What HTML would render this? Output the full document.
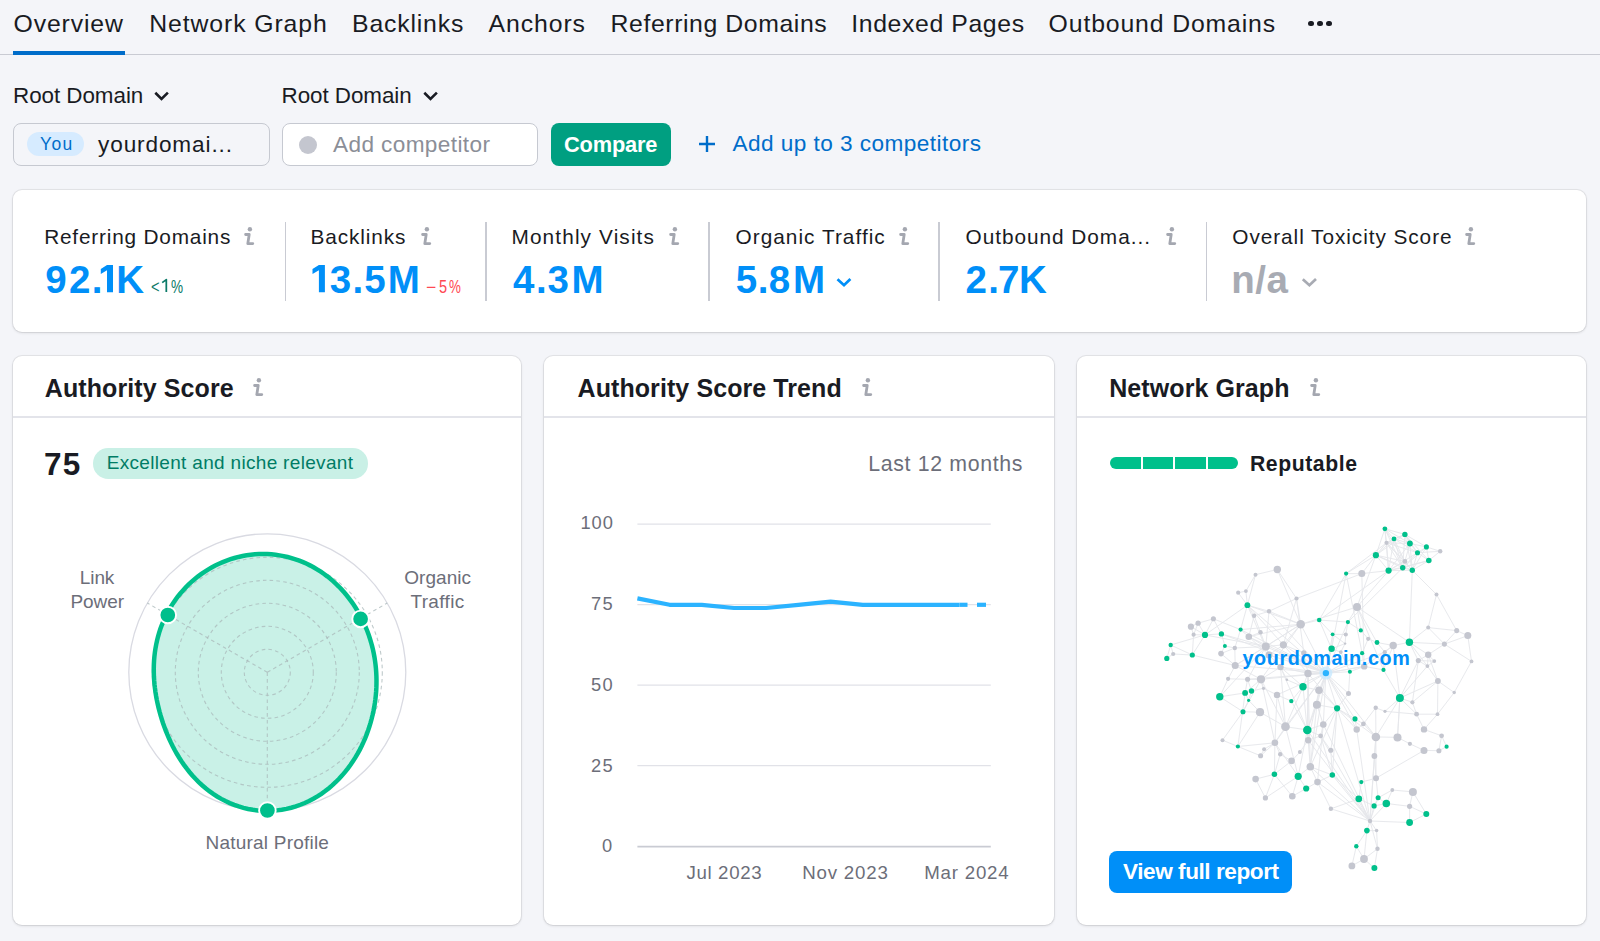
<!DOCTYPE html><html><head><meta charset="utf-8"><style>
*{margin:0;padding:0;box-sizing:border-box}
html,body{width:1600px;height:941px;overflow:hidden;background:#f4f5f9;font-family:"Liberation Sans",sans-serif}
.t{position:absolute;white-space:nowrap;line-height:1}
.ic{position:absolute;overflow:visible}
.box{position:absolute}
.card{position:absolute;background:#fff;border-radius:9px;box-shadow:0 0 0 1px rgba(25,27,35,0.07),0 1px 3px rgba(25,27,35,0.12)}
svg.full{position:absolute;left:0;top:0}
</style></head><body>
<div class="box" style="left:0;top:53.5px;width:1600px;height:1.5px;background:#c9cbd3"></div>
<div class="box" style="left:13px;top:51px;width:112px;height:4px;background:#006dca"></div>
<div class="box" style="left:1307.8px;top:20.6px;width:5.8px;height:5.8px;border-radius:50%;background:#191b23"></div>
<div class="box" style="left:1316.8999999999999px;top:20.6px;width:5.8px;height:5.8px;border-radius:50%;background:#191b23"></div>
<div class="box" style="left:1326.1px;top:20.6px;width:5.8px;height:5.8px;border-radius:50%;background:#191b23"></div>
<svg class="ic" style="left:0;top:0" width="1" height="1"><path d="M155.3 92.8 L161.5 98.9 L167.9 92.6" fill="none" stroke="#191b23" stroke-width="2.6" stroke-linejoin="miter"/></svg>
<svg class="ic" style="left:0;top:0" width="1" height="1"><path d="M424.3 92.8 L430.5 98.9 L436.9 92.6" fill="none" stroke="#191b23" stroke-width="2.6" stroke-linejoin="miter"/></svg>
<div class="box" style="left:13px;top:123px;width:257px;height:43px;border:1.2px solid #c6c9d1;border-radius:8px"></div>
<div class="box" style="left:27px;top:132px;width:57px;height:24px;border-radius:12px;background:#d6ebff"></div>
<div class="box" style="left:282px;top:123px;width:256px;height:43px;border:1.2px solid #c6c9d1;border-radius:8px;background:#fff"></div>
<div class="box" style="left:298.5px;top:135.5px;width:18.5px;height:18.5px;border-radius:50%;background:#c4c6cf"></div>
<div class="box" style="left:551px;top:123px;width:120px;height:43px;border-radius:8px;background:#009f81"></div>
<svg class="ic" style="left:697px;top:134px" width="20" height="20"><path d="M2 10 H18 M10 2 V18" stroke="#006dca" stroke-width="2.4"/></svg>
<div class="card" style="left:13px;top:190px;width:1573px;height:142px"></div>
<div class="box" style="left:284.95px;top:221.5px;width:1.5px;height:79px;background:#c9cbd3"></div>
<div class="box" style="left:485.45px;top:221.5px;width:1.5px;height:79px;background:#c9cbd3"></div>
<div class="box" style="left:708.45px;top:221.5px;width:1.5px;height:79px;background:#c9cbd3"></div>
<div class="box" style="left:938.45px;top:221.5px;width:1.5px;height:79px;background:#c9cbd3"></div>
<div class="box" style="left:1205.95px;top:221.5px;width:1.5px;height:79px;background:#c9cbd3"></div>
<svg class="ic" style="left:243.3px;top:226.0px" width="13" height="21" viewBox="0 0 13 21"><circle cx="6.9" cy="3.2" r="2.2" fill="#a4a7b0"/><path d="M2.6 8.5 H6.2 L4.8 17.6 H9.8" fill="none" stroke="#a4a7b0" stroke-width="2.8" stroke-linecap="round" stroke-linejoin="round"/></svg>
<svg class="ic" style="left:419.9px;top:226.0px" width="13" height="21" viewBox="0 0 13 21"><circle cx="6.9" cy="3.2" r="2.2" fill="#a4a7b0"/><path d="M2.6 8.5 H6.2 L4.8 17.6 H9.8" fill="none" stroke="#a4a7b0" stroke-width="2.8" stroke-linecap="round" stroke-linejoin="round"/></svg>
<svg class="ic" style="left:668.0px;top:226.0px" width="13" height="21" viewBox="0 0 13 21"><circle cx="6.9" cy="3.2" r="2.2" fill="#a4a7b0"/><path d="M2.6 8.5 H6.2 L4.8 17.6 H9.8" fill="none" stroke="#a4a7b0" stroke-width="2.8" stroke-linecap="round" stroke-linejoin="round"/></svg>
<svg class="ic" style="left:897.9px;top:226.0px" width="13" height="21" viewBox="0 0 13 21"><circle cx="6.9" cy="3.2" r="2.2" fill="#a4a7b0"/><path d="M2.6 8.5 H6.2 L4.8 17.6 H9.8" fill="none" stroke="#a4a7b0" stroke-width="2.8" stroke-linecap="round" stroke-linejoin="round"/></svg>
<svg class="ic" style="left:1164.8px;top:226.0px" width="13" height="21" viewBox="0 0 13 21"><circle cx="6.9" cy="3.2" r="2.2" fill="#a4a7b0"/><path d="M2.6 8.5 H6.2 L4.8 17.6 H9.8" fill="none" stroke="#a4a7b0" stroke-width="2.8" stroke-linecap="round" stroke-linejoin="round"/></svg>
<svg class="ic" style="left:1464.0px;top:226.0px" width="13" height="21" viewBox="0 0 13 21"><circle cx="6.9" cy="3.2" r="2.2" fill="#a4a7b0"/><path d="M2.6 8.5 H6.2 L4.8 17.6 H9.8" fill="none" stroke="#a4a7b0" stroke-width="2.8" stroke-linecap="round" stroke-linejoin="round"/></svg>
<svg class="ic" style="left:0;top:0" width="1" height="1"><path d="M837.5 279.2 L844 285.2 L850.4 279.0" fill="none" stroke="#008ff8" stroke-width="2.7" stroke-linejoin="miter"/></svg>
<svg class="ic" style="left:0;top:0" width="1" height="1"><path d="M1302.8 279.2 L1309.4 285.2 L1316.0 279.0" fill="none" stroke="#a8abb3" stroke-width="2.7" stroke-linejoin="miter"/></svg>
<div class="card" style="left:12.6px;top:355.5px;width:508.6px;height:569.5px"></div>
<div class="box" style="left:12.6px;top:416px;width:508.6px;height:1.5px;background:#e3e4ea"></div>
<div class="card" style="left:544.3px;top:355.5px;width:510.1px;height:569.5px"></div>
<div class="box" style="left:544.3px;top:416px;width:510.1px;height:1.5px;background:#e3e4ea"></div>
<div class="card" style="left:1077.4px;top:355.5px;width:509.1px;height:569.5px"></div>
<div class="box" style="left:1077.4px;top:416px;width:509.1px;height:1.5px;background:#e3e4ea"></div>
<svg class="ic" style="left:252.4px;top:377.3px" width="13" height="21" viewBox="0 0 13 21"><circle cx="6.9" cy="3.2" r="2.2" fill="#a4a7b0"/><path d="M2.6 8.5 H6.2 L4.8 17.6 H9.8" fill="none" stroke="#a4a7b0" stroke-width="2.8" stroke-linecap="round" stroke-linejoin="round"/></svg>
<svg class="ic" style="left:860.7px;top:377.3px" width="13" height="21" viewBox="0 0 13 21"><circle cx="6.9" cy="3.2" r="2.2" fill="#a4a7b0"/><path d="M2.6 8.5 H6.2 L4.8 17.6 H9.8" fill="none" stroke="#a4a7b0" stroke-width="2.8" stroke-linecap="round" stroke-linejoin="round"/></svg>
<svg class="ic" style="left:1309.0px;top:377.3px" width="13" height="21" viewBox="0 0 13 21"><circle cx="6.9" cy="3.2" r="2.2" fill="#a4a7b0"/><path d="M2.6 8.5 H6.2 L4.8 17.6 H9.8" fill="none" stroke="#a4a7b0" stroke-width="2.8" stroke-linecap="round" stroke-linejoin="round"/></svg>
<div class="box" style="left:93px;top:448px;width:275px;height:30.6px;border-radius:15.3px;background:#c9f0e6"></div>
<div class="box" style="left:1110px;top:457.4px;width:30.5px;height:11.8px;border-radius:6px 0 0 6px;background:#00c08b"></div>
<div class="box" style="left:1143px;top:457.4px;width:30px;height:11.8px;border-radius:0;background:#00c08b"></div>
<div class="box" style="left:1175.2px;top:457.4px;width:30.399999999999864px;height:11.8px;border-radius:0;background:#00c08b"></div>
<div class="box" style="left:1207.6px;top:457.4px;width:30.40000000000009px;height:11.8px;border-radius:0 6px 6px 0;background:#00c08b"></div>
<div class="box" style="left:1109.2px;top:850.8px;width:183px;height:42.4px;border-radius:8px;background:#008ff8"></div>
<svg class="full" width="1600" height="941" viewBox="0 0 1600 941"><circle cx="267.3" cy="672.3" r="138.5" fill="none" stroke="#d9dae2" stroke-width="1.3"/>
<path d="M376.22 672.30 L376.40 676.11 L376.49 679.94 L376.47 683.77 L376.36 687.63 L376.14 691.49 L375.81 695.37 L375.39 699.25 L374.86 703.14 L374.22 707.04 L373.48 710.95 L372.62 714.85 L371.66 718.77 L370.59 722.68 L369.40 726.59 L368.09 730.49 L366.67 734.39 L365.12 738.28 L363.44 742.15 L361.64 746.00 L359.70 749.83 L357.63 753.63 L355.41 757.39 L353.06 761.11 L350.56 764.77 L347.92 768.37 L345.12 771.91 L342.18 775.36 L339.08 778.72 L335.84 781.98 L332.44 785.13 L328.90 788.15 L325.21 791.03 L321.38 793.77 L317.41 796.34 L313.32 798.73 L309.10 800.94 L304.77 802.96 L300.33 804.77 L295.79 806.36 L291.18 807.72 L286.49 808.85 L281.75 809.74 L276.96 810.38 L272.14 810.77 L267.30 810.91 L262.46 810.80 L257.64 810.43 L252.85 809.81 L248.10 808.94 L243.40 807.83 L238.78 806.48 L234.24 804.90 L229.79 803.10 L225.45 801.09 L221.23 798.88 L217.13 796.47 L213.16 793.90 L209.33 791.15 L205.64 788.26 L202.10 785.23 L198.71 782.07 L195.46 778.81 L192.37 775.44 L189.42 771.98 L186.62 768.45 L183.96 764.85 L181.45 761.20 L179.07 757.50 L176.82 753.77 L174.70 750.00 L172.71 746.20 L170.83 742.39 L169.06 738.56 L167.40 734.72 L165.84 730.88 L164.39 727.02 L163.03 723.16 L161.77 719.29 L160.59 715.41 L159.51 711.53 L158.52 707.64 L157.62 703.75 L156.80 699.85 L156.08 695.94 L155.45 692.02 L154.92 688.09 L154.48 684.16 L154.15 680.21 L153.91 676.26 L153.79 672.30 L153.77 668.34 L153.87 664.37 L154.08 660.40 L154.41 656.43 L154.87 652.48 L155.45 648.53 L156.17 644.59 L157.01 640.67 L157.98 636.78 L159.09 632.91 L160.33 629.08 L161.71 625.29 L163.23 621.54 L164.87 617.84 L166.66 614.19 L168.57 610.61 L170.62 607.09 L172.80 603.64 L175.10 600.27 L177.53 596.97 L180.08 593.77 L182.75 590.66 L185.54 587.64 L188.44 584.72 L191.45 581.91 L194.57 579.21 L197.78 576.62 L201.10 574.15 L204.51 571.81 L208.00 569.59 L211.58 567.51 L215.24 565.56 L218.97 563.75 L222.77 562.09 L226.63 560.57 L230.55 559.20 L234.52 557.99 L238.54 556.93 L242.59 556.03 L246.67 555.30 L250.78 554.73 L254.90 554.32 L259.03 554.08 L263.17 554.00 L267.30 554.10 L271.42 554.35 L275.52 554.78 L279.59 555.36 L283.63 556.11 L287.63 557.02 L291.58 558.08 L295.47 559.30 L299.31 560.66 L303.08 562.17 L306.78 563.82 L310.41 565.61 L313.95 567.52 L317.41 569.55 L320.78 571.71 L324.07 573.98 L327.25 576.35 L330.35 578.83 L333.34 581.40 L336.24 584.06 L339.03 586.81 L341.73 589.64 L344.32 592.54 L346.82 595.51 L349.21 598.55 L351.49 601.65 L353.68 604.81 L355.77 608.02 L357.75 611.29 L359.64 614.60 L361.42 617.96 L363.10 621.36 L364.69 624.80 L366.17 628.28 L367.56 631.79 L368.84 635.34 L370.03 638.92 L371.11 642.53 L372.10 646.17 L372.99 649.83 L373.78 653.53 L374.47 657.24 L375.05 660.97 L375.54 664.73 L375.93 668.51Z" fill="#c9f1e7"/>
<circle cx="267.3" cy="672.3" r="23" fill="none" stroke="#a9b8ba" stroke-opacity="0.75" stroke-width="1.1" stroke-dasharray="3.6 3.2"/>
<circle cx="267.3" cy="672.3" r="46" fill="none" stroke="#a9b8ba" stroke-opacity="0.75" stroke-width="1.1" stroke-dasharray="3.6 3.2"/>
<circle cx="267.3" cy="672.3" r="69" fill="none" stroke="#a9b8ba" stroke-opacity="0.75" stroke-width="1.1" stroke-dasharray="3.6 3.2"/>
<circle cx="267.3" cy="672.3" r="92" fill="none" stroke="#a9b8ba" stroke-opacity="0.75" stroke-width="1.1" stroke-dasharray="3.6 3.2"/>
<circle cx="267.3" cy="672.3" r="115" fill="none" stroke="#a9b8ba" stroke-opacity="0.75" stroke-width="1.1" stroke-dasharray="3.6 3.2"/>
<line x1="267.3" y1="672.3" x2="147.36" y2="603.05" stroke="#a9b8ba" stroke-opacity="0.75" stroke-width="1.1" stroke-dasharray="3.6 3.2"/>
<line x1="267.3" y1="672.3" x2="387.24" y2="603.05" stroke="#a9b8ba" stroke-opacity="0.75" stroke-width="1.1" stroke-dasharray="3.6 3.2"/>
<line x1="267.3" y1="672.3" x2="267.30" y2="810.80" stroke="#a9b8ba" stroke-opacity="0.75" stroke-width="1.1" stroke-dasharray="3.6 3.2"/>
<path d="M376.22 672.30 L376.40 676.11 L376.49 679.94 L376.47 683.77 L376.36 687.63 L376.14 691.49 L375.81 695.37 L375.39 699.25 L374.86 703.14 L374.22 707.04 L373.48 710.95 L372.62 714.85 L371.66 718.77 L370.59 722.68 L369.40 726.59 L368.09 730.49 L366.67 734.39 L365.12 738.28 L363.44 742.15 L361.64 746.00 L359.70 749.83 L357.63 753.63 L355.41 757.39 L353.06 761.11 L350.56 764.77 L347.92 768.37 L345.12 771.91 L342.18 775.36 L339.08 778.72 L335.84 781.98 L332.44 785.13 L328.90 788.15 L325.21 791.03 L321.38 793.77 L317.41 796.34 L313.32 798.73 L309.10 800.94 L304.77 802.96 L300.33 804.77 L295.79 806.36 L291.18 807.72 L286.49 808.85 L281.75 809.74 L276.96 810.38 L272.14 810.77 L267.30 810.91 L262.46 810.80 L257.64 810.43 L252.85 809.81 L248.10 808.94 L243.40 807.83 L238.78 806.48 L234.24 804.90 L229.79 803.10 L225.45 801.09 L221.23 798.88 L217.13 796.47 L213.16 793.90 L209.33 791.15 L205.64 788.26 L202.10 785.23 L198.71 782.07 L195.46 778.81 L192.37 775.44 L189.42 771.98 L186.62 768.45 L183.96 764.85 L181.45 761.20 L179.07 757.50 L176.82 753.77 L174.70 750.00 L172.71 746.20 L170.83 742.39 L169.06 738.56 L167.40 734.72 L165.84 730.88 L164.39 727.02 L163.03 723.16 L161.77 719.29 L160.59 715.41 L159.51 711.53 L158.52 707.64 L157.62 703.75 L156.80 699.85 L156.08 695.94 L155.45 692.02 L154.92 688.09 L154.48 684.16 L154.15 680.21 L153.91 676.26 L153.79 672.30 L153.77 668.34 L153.87 664.37 L154.08 660.40 L154.41 656.43 L154.87 652.48 L155.45 648.53 L156.17 644.59 L157.01 640.67 L157.98 636.78 L159.09 632.91 L160.33 629.08 L161.71 625.29 L163.23 621.54 L164.87 617.84 L166.66 614.19 L168.57 610.61 L170.62 607.09 L172.80 603.64 L175.10 600.27 L177.53 596.97 L180.08 593.77 L182.75 590.66 L185.54 587.64 L188.44 584.72 L191.45 581.91 L194.57 579.21 L197.78 576.62 L201.10 574.15 L204.51 571.81 L208.00 569.59 L211.58 567.51 L215.24 565.56 L218.97 563.75 L222.77 562.09 L226.63 560.57 L230.55 559.20 L234.52 557.99 L238.54 556.93 L242.59 556.03 L246.67 555.30 L250.78 554.73 L254.90 554.32 L259.03 554.08 L263.17 554.00 L267.30 554.10 L271.42 554.35 L275.52 554.78 L279.59 555.36 L283.63 556.11 L287.63 557.02 L291.58 558.08 L295.47 559.30 L299.31 560.66 L303.08 562.17 L306.78 563.82 L310.41 565.61 L313.95 567.52 L317.41 569.55 L320.78 571.71 L324.07 573.98 L327.25 576.35 L330.35 578.83 L333.34 581.40 L336.24 584.06 L339.03 586.81 L341.73 589.64 L344.32 592.54 L346.82 595.51 L349.21 598.55 L351.49 601.65 L353.68 604.81 L355.77 608.02 L357.75 611.29 L359.64 614.60 L361.42 617.96 L363.10 621.36 L364.69 624.80 L366.17 628.28 L367.56 631.79 L368.84 635.34 L370.03 638.92 L371.11 642.53 L372.10 646.17 L372.99 649.83 L373.78 653.53 L374.47 657.24 L375.05 660.97 L375.54 664.73 L375.93 668.51Z" fill="none" stroke="#00c08b" stroke-width="4.5"/>
<circle cx="167.8" cy="615.0" r="8.3" fill="#00bf8c" stroke="#fff" stroke-width="1.9"/>
<circle cx="360.6" cy="618.9" r="8.3" fill="#00bf8c" stroke="#fff" stroke-width="1.9"/>
<circle cx="267.4" cy="810.5" r="8.3" fill="#00bf8c" stroke="#fff" stroke-width="1.9"/><line x1="637.4" y1="524.2" x2="990.8" y2="524.2" stroke="#e1e2e8" stroke-width="1.3"/>
<line x1="637.4" y1="604.7" x2="990.8" y2="604.7" stroke="#e1e2e8" stroke-width="1.3"/>
<line x1="637.4" y1="685.2" x2="990.8" y2="685.2" stroke="#e1e2e8" stroke-width="1.3"/>
<line x1="637.4" y1="765.7" x2="990.8" y2="765.7" stroke="#e1e2e8" stroke-width="1.3"/>
<line x1="637.4" y1="846.6" x2="990.8" y2="846.6" stroke="#c9cbd3" stroke-width="1.6"/>
<path d="M637.4 598.4 L669.6 604.8 L701.8 604.8 L734.0 608.0 L766.2 608.0 L798.4 604.8 L830.6 601.6 L862.8 604.8 L895.0 604.8 L927.2 604.8 L959.4 604.8" fill="none" stroke="#2bb3ff" stroke-width="4.2" stroke-linejoin="round"/>
<line x1="959.4" y1="604.8" x2="967.5" y2="604.8" stroke="#2bb3ff" stroke-width="4.2"/>
<line x1="977" y1="604.8" x2="986" y2="604.8" stroke="#2bb3ff" stroke-width="4.2"/><g stroke="#d5d7de" stroke-width="0.9" opacity="0.6"><line x1="1384.9" y1="528.8" x2="1394.0" y2="538.9"/><line x1="1384.9" y1="528.8" x2="1386.5" y2="542.8"/><line x1="1384.9" y1="528.8" x2="1409.9" y2="543.5"/><line x1="1394.0" y1="538.9" x2="1404.9" y2="534.4"/><line x1="1394.0" y1="538.9" x2="1386.5" y2="542.8"/><line x1="1404.9" y1="534.4" x2="1409.9" y2="543.5"/><line x1="1404.9" y1="534.4" x2="1426.4" y2="546.9"/><line x1="1409.9" y1="543.5" x2="1426.4" y2="546.9"/><line x1="1409.9" y1="543.5" x2="1417.5" y2="552.7"/><line x1="1426.4" y1="546.9" x2="1417.5" y2="552.7"/><line x1="1426.4" y1="546.9" x2="1428.8" y2="560.5"/><line x1="1417.5" y1="552.7" x2="1428.8" y2="560.5"/><line x1="1375.9" y1="555.2" x2="1386.5" y2="542.8"/><line x1="1375.9" y1="555.2" x2="1394.0" y2="538.9"/><line x1="1375.9" y1="555.2" x2="1388.6" y2="570.6"/><line x1="1375.9" y1="555.2" x2="1404.9" y2="561.4"/><line x1="1386.5" y1="542.8" x2="1388.6" y2="570.6"/><line x1="1386.5" y1="542.8" x2="1404.9" y2="561.4"/><line x1="1386.5" y1="542.8" x2="1402.7" y2="567.8"/><line x1="1394.0" y1="538.9" x2="1402.7" y2="567.8"/><line x1="1394.0" y1="538.9" x2="1404.9" y2="561.4"/><line x1="1409.9" y1="543.5" x2="1404.9" y2="561.4"/><line x1="1409.9" y1="543.5" x2="1412.3" y2="570.3"/><line x1="1417.5" y1="552.7" x2="1402.7" y2="567.8"/><line x1="1417.5" y1="552.7" x2="1412.3" y2="570.3"/><line x1="1428.8" y1="560.5" x2="1412.3" y2="570.3"/><line x1="1428.8" y1="560.5" x2="1402.7" y2="567.8"/><line x1="1404.9" y1="561.4" x2="1388.6" y2="570.6"/><line x1="1404.9" y1="561.4" x2="1402.7" y2="567.8"/><line x1="1404.9" y1="561.4" x2="1412.3" y2="570.3"/><line x1="1388.6" y1="570.6" x2="1402.7" y2="567.8"/><line x1="1402.7" y1="567.8" x2="1412.3" y2="570.3"/><line x1="1440.2" y1="551.3" x2="1426.4" y2="546.9"/><line x1="1440.2" y1="551.3" x2="1428.8" y2="560.5"/><line x1="1404.9" y1="534.4" x2="1386.5" y2="542.8"/><line x1="1409.9" y1="543.5" x2="1388.6" y2="570.6"/><line x1="1417.5" y1="552.7" x2="1388.6" y2="570.6"/><line x1="1375.9" y1="555.2" x2="1346.1" y2="573.6"/><line x1="1346.1" y1="573.6" x2="1319.2" y2="620.0"/><line x1="1388.6" y1="570.6" x2="1361.8" y2="573.6"/><line x1="1361.8" y1="573.6" x2="1296.5" y2="598.5"/><line x1="1375.9" y1="555.2" x2="1357.0" y2="607.0"/><line x1="1412.3" y1="570.3" x2="1409.4" y2="642.3"/><line x1="1412.3" y1="570.3" x2="1436.5" y2="594.5"/><line x1="1436.5" y1="594.5" x2="1456.7" y2="630.6"/><line x1="1277.3" y1="569.5" x2="1255.5" y2="574.7"/><line x1="1255.5" y1="574.7" x2="1247.4" y2="605.2"/><line x1="1238.2" y1="592.7" x2="1247.4" y2="605.2"/><line x1="1245.9" y1="591.1" x2="1247.4" y2="605.2"/><line x1="1277.3" y1="569.5" x2="1296.5" y2="598.5"/><line x1="1247.4" y1="605.2" x2="1269.0" y2="611.3"/><line x1="1269.0" y1="611.3" x2="1300.7" y2="624.3"/><line x1="1247.4" y1="605.2" x2="1254.1" y2="615.8"/><line x1="1254.1" y1="615.8" x2="1260.5" y2="632.3"/><line x1="1247.4" y1="605.2" x2="1205.0" y2="634.9"/><line x1="1247.4" y1="605.2" x2="1240.6" y2="629.6"/><line x1="1247.4" y1="605.2" x2="1283.4" y2="644.8"/><line x1="1213.4" y1="618.8" x2="1205.0" y2="634.9"/><line x1="1213.4" y1="618.8" x2="1240.6" y2="629.6"/><line x1="1198.1" y1="623.2" x2="1205.0" y2="634.9"/><line x1="1190.9" y1="626.7" x2="1205.0" y2="634.9"/><line x1="1193.6" y1="634.7" x2="1205.0" y2="634.9"/><line x1="1205.0" y1="634.9" x2="1221.4" y2="633.9"/><line x1="1205.0" y1="634.9" x2="1170.7" y2="645.0"/><line x1="1170.7" y1="645.0" x2="1192.3" y2="655.0"/><line x1="1205.0" y1="634.9" x2="1192.3" y2="655.0"/><line x1="1221.4" y1="633.9" x2="1224.9" y2="645.9"/><line x1="1296.5" y1="598.5" x2="1283.4" y2="644.8"/><line x1="1269.0" y1="611.3" x2="1265.8" y2="646.6"/><line x1="1300.7" y1="624.3" x2="1319.2" y2="620.0"/><line x1="1260.5" y1="632.3" x2="1265.8" y2="646.6"/><line x1="1248.8" y1="636.8" x2="1265.8" y2="646.6"/><line x1="1234.8" y1="648.0" x2="1265.8" y2="646.6"/><line x1="1221.4" y1="633.9" x2="1265.8" y2="646.6"/><line x1="1170.7" y1="645.0" x2="1166.8" y2="658.4"/><line x1="1166.8" y1="658.4" x2="1173.2" y2="654.0"/><line x1="1173.2" y1="654.0" x2="1192.3" y2="655.0"/><line x1="1192.3" y1="655.0" x2="1235.2" y2="665.5"/><line x1="1221.0" y1="653.6" x2="1235.2" y2="665.5"/><line x1="1235.2" y1="665.5" x2="1228.1" y2="678.8"/><line x1="1228.1" y1="678.8" x2="1219.8" y2="696.8"/><line x1="1219.8" y1="696.8" x2="1245.1" y2="692.9"/><line x1="1245.1" y1="692.9" x2="1251.5" y2="691.0"/><line x1="1251.5" y1="691.0" x2="1247.6" y2="679.3"/><line x1="1235.2" y1="665.5" x2="1261.0" y2="679.3"/><line x1="1247.6" y1="679.3" x2="1261.0" y2="679.3"/><line x1="1261.0" y1="679.3" x2="1280.5" y2="667.1"/><line x1="1280.5" y1="667.1" x2="1308.0" y2="673.4"/><line x1="1269.0" y1="655.0" x2="1280.5" y2="667.1"/><line x1="1248.6" y1="700.3" x2="1245.1" y2="692.9"/><line x1="1243.0" y1="711.7" x2="1248.6" y2="700.3"/><line x1="1428.2" y1="627.6" x2="1456.7" y2="630.6"/><line x1="1456.7" y1="630.6" x2="1467.8" y2="635.6"/><line x1="1428.2" y1="627.6" x2="1409.4" y2="642.3"/><line x1="1409.4" y1="642.3" x2="1393.2" y2="645.5"/><line x1="1393.2" y1="645.5" x2="1377.0" y2="642.5"/><line x1="1377.0" y1="642.5" x2="1368.2" y2="638.8"/><line x1="1368.2" y1="638.8" x2="1360.8" y2="630.4"/><line x1="1360.8" y1="630.4" x2="1347.9" y2="622.1"/><line x1="1444.4" y1="644.1" x2="1456.7" y2="630.6"/><line x1="1444.4" y1="644.1" x2="1428.2" y2="654.7"/><line x1="1428.2" y1="654.7" x2="1418.3" y2="660.6"/><line x1="1418.3" y1="660.6" x2="1409.4" y2="642.3"/><line x1="1418.3" y1="660.6" x2="1434.3" y2="661.1"/><line x1="1418.3" y1="660.6" x2="1427.4" y2="666.1"/><line x1="1427.4" y1="666.1" x2="1437.9" y2="681.0"/><line x1="1437.9" y1="681.0" x2="1454.2" y2="692.5"/><line x1="1454.2" y1="692.5" x2="1471.5" y2="661.4"/><line x1="1471.5" y1="661.4" x2="1467.8" y2="635.6"/><line x1="1349.9" y1="671.7" x2="1325.9" y2="673.1"/><line x1="1383.5" y1="669.9" x2="1399.9" y2="698.0"/><line x1="1362.1" y1="653.2" x2="1364.2" y2="666.4"/><line x1="1364.2" y1="666.4" x2="1325.9" y2="673.1"/><line x1="1325.9" y1="673.1" x2="1308.0" y2="673.4"/><line x1="1325.9" y1="673.1" x2="1331.6" y2="648.8"/><line x1="1332.6" y1="634.3" x2="1331.6" y2="648.8"/><line x1="1331.6" y1="648.8" x2="1319.2" y2="620.0"/><line x1="1332.6" y1="634.3" x2="1345.1" y2="643.6"/><line x1="1345.1" y1="643.6" x2="1345.8" y2="634.5"/><line x1="1409.4" y1="642.3" x2="1428.2" y2="654.7"/><line x1="1285.5" y1="726.7" x2="1260.0" y2="712.2"/><line x1="1285.5" y1="726.7" x2="1274.9" y2="742.8"/><line x1="1285.5" y1="726.7" x2="1307.3" y2="729.9"/><line x1="1307.3" y1="729.9" x2="1323.3" y2="724.5"/><line x1="1307.3" y1="729.9" x2="1308.2" y2="740.2"/><line x1="1323.3" y1="724.5" x2="1337.1" y2="708.3"/><line x1="1320.6" y1="735.9" x2="1307.3" y2="729.9"/><line x1="1274.9" y1="742.8" x2="1237.9" y2="746.5"/><line x1="1237.9" y1="746.5" x2="1222.5" y2="740.2"/><line x1="1222.5" y1="740.2" x2="1243.0" y2="711.7"/><line x1="1260.0" y1="712.2" x2="1237.9" y2="746.5"/><line x1="1274.9" y1="742.8" x2="1280.2" y2="754.3"/><line x1="1274.9" y1="742.8" x2="1274.4" y2="774.3"/><line x1="1291.6" y1="760.9" x2="1274.4" y2="774.3"/><line x1="1310.3" y1="766.7" x2="1298.2" y2="776.3"/><line x1="1298.2" y1="776.3" x2="1306.2" y2="788.5"/><line x1="1306.2" y1="788.5" x2="1317.5" y2="782.1"/><line x1="1317.5" y1="782.1" x2="1332.3" y2="775.0"/><line x1="1332.3" y1="775.0" x2="1330.8" y2="750.3"/><line x1="1332.3" y1="775.0" x2="1337.1" y2="708.3"/><line x1="1255.6" y1="779.1" x2="1265.4" y2="797.9"/><line x1="1265.4" y1="797.9" x2="1298.2" y2="776.3"/><line x1="1274.4" y1="774.3" x2="1292.3" y2="796.3"/><line x1="1292.3" y1="796.3" x2="1306.2" y2="788.5"/><line x1="1317.5" y1="782.1" x2="1330.9" y2="808.8"/><line x1="1330.9" y1="808.8" x2="1370.0" y2="821.0"/><line x1="1370.0" y1="821.0" x2="1409.6" y2="822.5"/><line x1="1370.0" y1="821.0" x2="1366.9" y2="830.6"/><line x1="1370.0" y1="821.0" x2="1358.8" y2="798.8"/><line x1="1370.0" y1="821.0" x2="1378.1" y2="797.8"/><line x1="1370.0" y1="821.0" x2="1386.3" y2="803.5"/><line x1="1370.0" y1="821.0" x2="1374.1" y2="805.9"/><line x1="1358.8" y1="798.8" x2="1332.3" y2="775.0"/><line x1="1376.0" y1="778.2" x2="1361.3" y2="782.1"/><line x1="1376.0" y1="778.2" x2="1375.9" y2="736.9"/><line x1="1374.4" y1="756.0" x2="1376.0" y2="778.2"/><line x1="1375.9" y1="736.9" x2="1375.7" y2="707.8"/><line x1="1375.7" y1="707.8" x2="1385.0" y2="711.3"/><line x1="1385.0" y1="711.3" x2="1416.6" y2="714.2"/><line x1="1416.6" y1="714.2" x2="1437.5" y2="714.2"/><line x1="1437.5" y1="714.2" x2="1437.9" y2="681.0"/><line x1="1424.0" y1="729.4" x2="1437.5" y2="714.2"/><line x1="1424.0" y1="729.4" x2="1441.6" y2="735.8"/><line x1="1441.6" y1="735.8" x2="1446.6" y2="746.7"/><line x1="1446.6" y1="746.7" x2="1438.9" y2="750.7"/><line x1="1438.9" y1="750.7" x2="1424.0" y2="750.4"/><line x1="1424.0" y1="750.4" x2="1409.9" y2="743.8"/><line x1="1409.9" y1="743.8" x2="1397.5" y2="737.4"/><line x1="1397.5" y1="737.4" x2="1375.9" y2="736.9"/><line x1="1397.5" y1="737.4" x2="1399.9" y2="698.0"/><line x1="1424.0" y1="750.4" x2="1376.0" y2="778.2"/><line x1="1412.9" y1="791.9" x2="1426.3" y2="814.0"/><line x1="1426.3" y1="814.0" x2="1409.6" y2="822.5"/><line x1="1409.6" y1="806.3" x2="1409.6" y2="822.5"/><line x1="1409.6" y1="806.3" x2="1386.3" y2="803.5"/><line x1="1412.9" y1="791.9" x2="1409.6" y2="806.3"/><line x1="1386.3" y1="803.5" x2="1392.3" y2="790.0"/><line x1="1366.9" y1="830.6" x2="1356.3" y2="846.3"/><line x1="1356.3" y1="846.3" x2="1351.9" y2="865.9"/><line x1="1351.9" y1="865.9" x2="1364.0" y2="859.0"/><line x1="1364.0" y1="859.0" x2="1374.4" y2="868.1"/><line x1="1374.4" y1="868.1" x2="1377.5" y2="848.8"/><line x1="1377.5" y1="848.8" x2="1370.0" y2="821.0"/><line x1="1366.9" y1="830.6" x2="1364.0" y2="859.0"/><line x1="1376.6" y1="830.6" x2="1370.0" y2="821.0"/><line x1="1357.0" y1="607.0" x2="1409.4" y2="642.3"/><line x1="1300.7" y1="624.3" x2="1325.9" y2="673.1"/><line x1="1265.8" y1="646.6" x2="1325.9" y2="673.1"/><line x1="1283.4" y1="644.8" x2="1325.9" y2="673.1"/><line x1="1261.0" y1="679.3" x2="1325.9" y2="673.1"/><line x1="1308.0" y1="673.4" x2="1337.1" y2="708.3"/><line x1="1316.9" y1="704.8" x2="1337.1" y2="708.3"/><line x1="1303.0" y1="686.7" x2="1325.9" y2="673.1"/><line x1="1337.1" y1="708.3" x2="1375.9" y2="736.9"/><line x1="1337.1" y1="708.3" x2="1356.7" y2="729.5"/><line x1="1357.0" y1="607.0" x2="1377.0" y2="642.5"/><line x1="1361.8" y1="573.6" x2="1364.2" y2="666.4"/><line x1="1346.1" y1="573.6" x2="1331.6" y2="648.8"/><line x1="1346.1" y1="573.6" x2="1362.1" y2="653.2"/><line x1="1319.2" y1="620.0" x2="1347.9" y2="622.1"/><line x1="1357.0" y1="607.0" x2="1300.7" y2="624.3"/><line x1="1357.0" y1="607.0" x2="1383.5" y2="669.9"/><line x1="1375.9" y1="555.2" x2="1361.8" y2="573.6"/><line x1="1388.6" y1="570.6" x2="1357.0" y2="607.0"/><line x1="1277.3" y1="569.5" x2="1300.7" y2="624.3"/><line x1="1399.9" y1="698.0" x2="1412.4" y2="702.3"/><line x1="1399.9" y1="698.0" x2="1416.6" y2="714.2"/><line x1="1412.4" y1="702.3" x2="1437.9" y2="681.0"/><line x1="1316.9" y1="704.8" x2="1307.3" y2="729.9"/><line x1="1303.0" y1="686.7" x2="1285.5" y2="726.7"/><line x1="1277.0" y1="694.9" x2="1285.5" y2="726.7"/><line x1="1291.3" y1="701.1" x2="1307.3" y2="729.9"/><line x1="1319.0" y1="690.3" x2="1337.1" y2="708.3"/><line x1="1308.0" y1="673.4" x2="1325.9" y2="673.1"/><line x1="1325.9" y1="673.1" x2="1364.2" y2="666.4"/><line x1="1325.9" y1="673.1" x2="1384.8" y2="652.2"/><line x1="1280.5" y1="667.1" x2="1303.0" y2="686.7"/><line x1="1265.8" y1="646.6" x2="1235.2" y2="665.5"/><line x1="1283.4" y1="644.8" x2="1308.0" y2="673.4"/><line x1="1300.7" y1="624.3" x2="1265.8" y2="646.6"/><line x1="1296.5" y1="598.5" x2="1303.8" y2="653.0"/><line x1="1383.5" y1="669.9" x2="1393.2" y2="645.5"/><line x1="1399.9" y1="698.0" x2="1397.5" y2="737.4"/><line x1="1356.7" y1="729.5" x2="1363.4" y2="723.9"/><line x1="1355.0" y1="718.9" x2="1337.1" y2="708.3"/><line x1="1363.4" y1="723.9" x2="1375.9" y2="736.9"/><line x1="1323.3" y1="724.5" x2="1316.9" y2="704.8"/><line x1="1316.9" y1="704.8" x2="1319.0" y2="690.3"/><line x1="1303.0" y1="686.7" x2="1319.0" y2="690.3"/><line x1="1245.1" y1="692.9" x2="1237.9" y2="746.5"/><line x1="1219.8" y1="696.8" x2="1243.0" y2="711.7"/><line x1="1247.6" y1="679.3" x2="1245.1" y2="692.9"/><line x1="1235.2" y1="665.5" x2="1234.8" y2="648.0"/><line x1="1224.9" y1="645.9" x2="1221.0" y2="653.6"/><line x1="1221.0" y1="653.6" x2="1234.8" y2="648.0"/><line x1="1240.6" y1="629.6" x2="1248.8" y2="636.8"/><line x1="1221.4" y1="633.9" x2="1213.4" y2="618.8"/><line x1="1198.1" y1="623.2" x2="1190.9" y2="626.7"/><line x1="1193.6" y1="634.7" x2="1190.9" y2="626.7"/><line x1="1254.1" y1="615.8" x2="1248.8" y2="636.8"/><line x1="1346.1" y1="573.6" x2="1361.8" y2="573.6"/><line x1="1436.5" y1="594.5" x2="1428.2" y2="627.6"/><line x1="1357.0" y1="607.0" x2="1347.9" y2="622.1"/><line x1="1357.0" y1="607.0" x2="1360.8" y2="630.4"/><line x1="1255.5" y1="574.7" x2="1245.9" y2="591.1"/><line x1="1238.2" y1="592.7" x2="1245.9" y2="591.1"/><line x1="1296.5" y1="598.5" x2="1300.7" y2="624.3"/><line x1="1296.5" y1="598.5" x2="1269.0" y2="611.3"/><line x1="1269.0" y1="611.3" x2="1254.1" y2="615.8"/><line x1="1213.4" y1="618.8" x2="1198.1" y2="623.2"/><line x1="1198.1" y1="623.2" x2="1193.6" y2="634.7"/><line x1="1260.5" y1="632.3" x2="1248.8" y2="636.8"/><line x1="1265.8" y1="646.6" x2="1269.0" y2="655.0"/><line x1="1283.4" y1="644.8" x2="1269.0" y2="655.0"/><line x1="1265.8" y1="646.6" x2="1283.4" y2="644.8"/><line x1="1234.8" y1="648.0" x2="1224.9" y2="645.9"/><line x1="1173.2" y1="654.0" x2="1170.7" y2="645.0"/><line x1="1234.8" y1="648.0" x2="1240.6" y2="629.6"/><line x1="1193.6" y1="634.7" x2="1192.3" y2="655.0"/><line x1="1319.2" y1="620.0" x2="1332.6" y2="634.3"/><line x1="1280.5" y1="667.1" x2="1286.9" y2="679.8"/><line x1="1303.8" y1="653.0" x2="1308.0" y2="673.4"/><line x1="1283.4" y1="644.8" x2="1303.8" y2="653.0"/><line x1="1308.0" y1="673.4" x2="1303.0" y2="686.7"/><line x1="1228.1" y1="678.8" x2="1247.6" y2="679.3"/><line x1="1261.0" y1="679.3" x2="1263.5" y2="688.3"/><line x1="1286.9" y1="679.8" x2="1303.0" y2="686.7"/><line x1="1263.5" y1="688.3" x2="1251.5" y2="691.0"/><line x1="1251.5" y1="691.0" x2="1248.6" y2="700.3"/><line x1="1263.5" y1="688.3" x2="1277.0" y2="694.9"/><line x1="1277.0" y1="694.9" x2="1291.3" y2="701.1"/><line x1="1303.0" y1="686.7" x2="1291.3" y2="701.1"/><line x1="1243.0" y1="711.7" x2="1260.0" y2="712.2"/><line x1="1248.6" y1="700.3" x2="1260.0" y2="712.2"/><line x1="1347.9" y1="622.1" x2="1345.8" y2="634.5"/><line x1="1332.6" y1="634.3" x2="1345.8" y2="634.5"/><line x1="1377.0" y1="642.5" x2="1384.8" y2="652.2"/><line x1="1393.2" y1="645.5" x2="1384.8" y2="652.2"/><line x1="1345.1" y1="643.6" x2="1340.8" y2="652.1"/><line x1="1331.6" y1="648.8" x2="1340.8" y2="652.1"/><line x1="1345.1" y1="643.6" x2="1331.6" y2="648.8"/><line x1="1368.2" y1="638.8" x2="1362.1" y2="653.2"/><line x1="1428.2" y1="627.6" x2="1444.4" y2="644.1"/><line x1="1467.8" y1="635.6" x2="1444.4" y2="644.1"/><line x1="1428.2" y1="654.7" x2="1434.3" y2="661.1"/><line x1="1428.2" y1="654.7" x2="1427.4" y2="666.1"/><line x1="1434.3" y1="661.1" x2="1427.4" y2="666.1"/><line x1="1444.4" y1="644.1" x2="1471.5" y2="661.4"/><line x1="1364.2" y1="666.4" x2="1349.9" y2="671.7"/><line x1="1319.0" y1="690.3" x2="1325.9" y2="673.1"/><line x1="1340.8" y1="652.1" x2="1349.9" y2="671.7"/><line x1="1384.8" y1="652.2" x2="1383.5" y2="669.9"/><line x1="1364.2" y1="666.4" x2="1383.5" y2="669.9"/><line x1="1348.5" y1="693.5" x2="1337.1" y2="708.3"/><line x1="1349.9" y1="671.7" x2="1348.5" y2="693.5"/><line x1="1454.2" y1="692.5" x2="1437.5" y2="714.2"/><line x1="1399.9" y1="698.0" x2="1385.0" y2="711.3"/><line x1="1355.0" y1="718.9" x2="1363.4" y2="723.9"/><line x1="1355.0" y1="718.9" x2="1356.7" y2="729.5"/><line x1="1323.3" y1="724.5" x2="1320.6" y2="735.9"/><line x1="1320.6" y1="735.9" x2="1308.2" y2="740.2"/><line x1="1237.9" y1="746.5" x2="1260.6" y2="755.8"/><line x1="1274.9" y1="742.8" x2="1264.1" y2="749.2"/><line x1="1264.1" y1="749.2" x2="1260.6" y2="755.8"/><line x1="1274.9" y1="742.8" x2="1260.6" y2="755.8"/><line x1="1280.2" y1="754.3" x2="1291.6" y2="760.9"/><line x1="1299.9" y1="752.1" x2="1291.6" y2="760.9"/><line x1="1308.2" y1="740.2" x2="1299.9" y2="752.1"/><line x1="1320.6" y1="735.9" x2="1330.8" y2="750.3"/><line x1="1310.3" y1="766.7" x2="1317.5" y2="782.1"/><line x1="1274.4" y1="774.3" x2="1255.6" y2="779.1"/><line x1="1280.2" y1="754.3" x2="1274.4" y2="774.3"/><line x1="1310.3" y1="766.7" x2="1332.3" y2="775.0"/><line x1="1361.3" y1="782.1" x2="1358.8" y2="798.8"/><line x1="1298.2" y1="776.3" x2="1292.3" y2="796.3"/><line x1="1412.4" y1="702.3" x2="1416.6" y2="714.2"/><line x1="1363.4" y1="723.9" x2="1375.7" y2="707.8"/><line x1="1416.6" y1="714.2" x2="1424.0" y2="729.4"/><line x1="1441.6" y1="735.8" x2="1438.9" y2="750.7"/><line x1="1375.9" y1="736.9" x2="1374.4" y2="756.0"/><line x1="1376.0" y1="778.2" x2="1378.1" y2="797.8"/><line x1="1274.4" y1="774.3" x2="1265.4" y2="797.9"/><line x1="1330.9" y1="808.8" x2="1358.8" y2="798.8"/><line x1="1392.3" y1="790.0" x2="1378.1" y2="797.8"/><line x1="1392.3" y1="790.0" x2="1412.9" y2="791.9"/><line x1="1358.8" y1="798.8" x2="1374.1" y2="805.9"/><line x1="1378.1" y1="797.8" x2="1374.1" y2="805.9"/><line x1="1378.1" y1="797.8" x2="1386.3" y2="803.5"/><line x1="1386.3" y1="803.5" x2="1374.1" y2="805.9"/><line x1="1409.6" y1="806.3" x2="1426.3" y2="814.0"/><line x1="1366.9" y1="830.6" x2="1376.6" y2="830.6"/><line x1="1356.3" y1="846.3" x2="1364.0" y2="859.0"/><line x1="1377.5" y1="848.8" x2="1364.0" y2="859.0"/><line x1="1376.6" y1="830.6" x2="1377.5" y2="848.8"/><line x1="1280.5" y1="667.1" x2="1325.9" y2="673.1"/><line x1="1269.0" y1="655.0" x2="1325.9" y2="673.1"/><line x1="1303.8" y1="653.0" x2="1325.9" y2="673.1"/><line x1="1347.9" y1="622.1" x2="1325.9" y2="673.1"/><line x1="1332.6" y1="634.3" x2="1325.9" y2="673.1"/><line x1="1362.1" y1="653.2" x2="1325.9" y2="673.1"/><line x1="1325.9" y1="673.1" x2="1348.5" y2="693.5"/><line x1="1325.9" y1="673.1" x2="1337.1" y2="708.3"/><line x1="1325.9" y1="673.1" x2="1307.3" y2="729.9"/><line x1="1325.9" y1="673.1" x2="1323.3" y2="724.5"/><line x1="1325.9" y1="673.1" x2="1285.5" y2="726.7"/><line x1="1277.0" y1="694.9" x2="1325.9" y2="673.1"/><line x1="1316.9" y1="704.8" x2="1325.9" y2="673.1"/><line x1="1247.6" y1="679.3" x2="1325.9" y2="673.1"/><line x1="1235.2" y1="665.5" x2="1325.9" y2="673.1"/><line x1="1325.9" y1="673.1" x2="1274.9" y2="742.8"/><line x1="1325.9" y1="673.1" x2="1310.3" y2="766.7"/><line x1="1325.9" y1="673.1" x2="1375.9" y2="736.9"/><line x1="1325.9" y1="673.1" x2="1356.7" y2="729.5"/><line x1="1325.9" y1="673.1" x2="1355.0" y2="718.9"/><line x1="1269.0" y1="611.3" x2="1325.9" y2="673.1"/><line x1="1247.4" y1="605.2" x2="1325.9" y2="673.1"/><line x1="1248.8" y1="636.8" x2="1325.9" y2="673.1"/><line x1="1240.6" y1="629.6" x2="1325.9" y2="673.1"/><line x1="1221.4" y1="633.9" x2="1325.9" y2="673.1"/><line x1="1337.1" y1="708.3" x2="1370.0" y2="821.0"/><line x1="1307.3" y1="729.9" x2="1370.0" y2="821.0"/><line x1="1323.3" y1="724.5" x2="1370.0" y2="821.0"/><line x1="1308.2" y1="740.2" x2="1370.0" y2="821.0"/><line x1="1310.3" y1="766.7" x2="1370.0" y2="821.0"/><line x1="1317.5" y1="782.1" x2="1370.0" y2="821.0"/><line x1="1375.9" y1="736.9" x2="1370.0" y2="821.0"/><line x1="1374.4" y1="756.0" x2="1370.0" y2="821.0"/><line x1="1356.7" y1="729.5" x2="1370.0" y2="821.0"/><line x1="1320.6" y1="735.9" x2="1370.0" y2="821.0"/><line x1="1332.3" y1="775.0" x2="1370.0" y2="821.0"/><line x1="1300.7" y1="624.3" x2="1235.2" y2="665.5"/><line x1="1300.7" y1="624.3" x2="1261.0" y2="679.3"/><line x1="1300.7" y1="624.3" x2="1247.4" y2="605.2"/><line x1="1300.7" y1="624.3" x2="1240.6" y2="629.6"/><line x1="1300.7" y1="624.3" x2="1248.8" y2="636.8"/><line x1="1265.8" y1="646.6" x2="1205.0" y2="634.9"/><line x1="1265.8" y1="646.6" x2="1247.6" y2="679.3"/><line x1="1265.8" y1="646.6" x2="1219.8" y2="696.8"/><line x1="1261.0" y1="679.3" x2="1245.1" y2="692.9"/><line x1="1261.0" y1="679.3" x2="1243.0" y2="711.7"/><line x1="1261.0" y1="679.3" x2="1285.5" y2="726.7"/><line x1="1261.0" y1="679.3" x2="1274.9" y2="742.8"/><line x1="1248.8" y1="636.8" x2="1269.0" y2="655.0"/><line x1="1247.4" y1="605.2" x2="1269.0" y2="655.0"/><line x1="1300.7" y1="624.3" x2="1283.4" y2="644.8"/><line x1="1280.5" y1="667.1" x2="1285.5" y2="726.7"/><line x1="1280.5" y1="667.1" x2="1307.3" y2="729.9"/><line x1="1308.0" y1="673.4" x2="1307.3" y2="729.9"/><line x1="1308.0" y1="673.4" x2="1308.2" y2="740.2"/><line x1="1308.0" y1="673.4" x2="1310.3" y2="766.7"/><line x1="1346.1" y1="573.6" x2="1386.5" y2="542.8"/><line x1="1404.9" y1="534.4" x2="1375.9" y2="555.2"/><line x1="1384.9" y1="528.8" x2="1375.9" y2="555.2"/><line x1="1337.1" y1="708.3" x2="1310.3" y2="766.7"/><line x1="1337.1" y1="708.3" x2="1330.8" y2="750.3"/><line x1="1307.3" y1="729.9" x2="1310.3" y2="766.7"/><line x1="1307.3" y1="729.9" x2="1298.2" y2="776.3"/><line x1="1285.5" y1="726.7" x2="1298.2" y2="776.3"/><line x1="1274.9" y1="742.8" x2="1298.2" y2="776.3"/><line x1="1316.9" y1="704.8" x2="1310.3" y2="766.7"/><line x1="1323.3" y1="724.5" x2="1317.5" y2="782.1"/><line x1="1320.6" y1="735.9" x2="1332.3" y2="775.0"/><line x1="1319.0" y1="690.3" x2="1308.2" y2="740.2"/><line x1="1303.0" y1="686.7" x2="1308.2" y2="740.2"/><line x1="1277.0" y1="694.9" x2="1274.9" y2="742.8"/><line x1="1418.3" y1="660.6" x2="1399.9" y2="698.0"/><line x1="1427.4" y1="666.1" x2="1399.9" y2="698.0"/><line x1="1393.2" y1="645.5" x2="1399.9" y2="698.0"/><line x1="1393.2" y1="645.5" x2="1364.2" y2="666.4"/><line x1="1409.4" y1="642.3" x2="1427.4" y2="666.1"/><line x1="1428.2" y1="654.7" x2="1437.9" y2="681.0"/><line x1="1409.4" y1="642.3" x2="1444.4" y2="644.1"/><line x1="1437.9" y1="681.0" x2="1399.9" y2="698.0"/><line x1="1418.3" y1="660.6" x2="1412.4" y2="702.3"/><line x1="1399.9" y1="698.0" x2="1375.9" y2="736.9"/><line x1="1384.9" y1="528.8" x2="1404.9" y2="534.4"/><line x1="1384.9" y1="528.8" x2="1404.9" y2="561.4"/><line x1="1404.9" y1="534.4" x2="1417.5" y2="552.7"/><line x1="1404.9" y1="534.4" x2="1428.8" y2="560.5"/><line x1="1394.0" y1="538.9" x2="1409.9" y2="543.5"/><line x1="1394.0" y1="538.9" x2="1417.5" y2="552.7"/><line x1="1426.4" y1="546.9" x2="1402.7" y2="567.8"/><line x1="1426.4" y1="546.9" x2="1412.3" y2="570.3"/><line x1="1409.9" y1="543.5" x2="1386.5" y2="542.8"/><line x1="1417.5" y1="552.7" x2="1386.5" y2="542.8"/><line x1="1412.3" y1="570.3" x2="1386.5" y2="542.8"/><line x1="1375.9" y1="555.2" x2="1402.7" y2="567.8"/><line x1="1375.9" y1="555.2" x2="1412.3" y2="570.3"/><line x1="1417.5" y1="552.7" x2="1440.2" y2="551.3"/><line x1="1388.6" y1="570.6" x2="1412.3" y2="570.3"/><line x1="1428.8" y1="560.5" x2="1388.6" y2="570.6"/><line x1="1404.9" y1="534.4" x2="1402.7" y2="567.8"/><line x1="1404.9" y1="534.4" x2="1412.3" y2="570.3"/><line x1="1394.0" y1="538.9" x2="1388.6" y2="570.6"/><line x1="1384.9" y1="528.8" x2="1388.6" y2="570.6"/><line x1="1384.9" y1="528.8" x2="1402.7" y2="567.8"/><line x1="1388.6" y1="570.6" x2="1319.2" y2="620.0"/><line x1="1402.7" y1="567.8" x2="1347.9" y2="622.1"/></g><circle cx="1325.9" cy="673.1" r="6.5" fill="#c7e9ff" opacity="0.8"/><circle cx="1384.9" cy="528.8" r="2.4" fill="#00c08b"/><circle cx="1404.9" cy="534.4" r="2.7" fill="#00c08b"/><circle cx="1394.0" cy="538.9" r="2.4" fill="#00c08b"/><circle cx="1409.9" cy="543.5" r="2.9" fill="#00c08b"/><circle cx="1426.4" cy="546.9" r="2.55" fill="#00c08b"/><circle cx="1375.9" cy="555.2" r="3.1" fill="#00c08b"/><circle cx="1417.5" cy="552.7" r="2.55" fill="#00c08b"/><circle cx="1428.8" cy="560.5" r="2.8" fill="#00c08b"/><circle cx="1388.6" cy="570.6" r="3.1" fill="#00c08b"/><circle cx="1402.7" cy="567.8" r="2.7" fill="#00c08b"/><circle cx="1412.3" cy="570.3" r="2.7" fill="#00c08b"/><circle cx="1346.1" cy="573.6" r="2.1" fill="#00c08b"/><circle cx="1386.5" cy="542.8" r="2.1" fill="#c4c6cf"/><circle cx="1440.2" cy="551.3" r="2.2" fill="#c4c6cf"/><circle cx="1404.9" cy="561.4" r="2.4" fill="#c4c6cf"/><circle cx="1361.8" cy="573.6" r="3.5" fill="#c4c6cf"/><circle cx="1436.5" cy="594.5" r="2.0" fill="#c4c6cf"/><circle cx="1357.0" cy="607.0" r="4.0" fill="#c4c6cf"/><circle cx="1277.3" cy="569.5" r="3.7" fill="#c4c6cf"/><circle cx="1255.5" cy="574.7" r="2.0" fill="#c4c6cf"/><circle cx="1238.2" cy="592.7" r="2.1" fill="#c4c6cf"/><circle cx="1245.9" cy="591.1" r="1.9" fill="#c4c6cf"/><circle cx="1296.5" cy="598.5" r="2.1" fill="#c4c6cf"/><circle cx="1269.0" cy="611.3" r="2.2" fill="#c4c6cf"/><circle cx="1254.1" cy="615.8" r="2.2" fill="#c4c6cf"/><circle cx="1213.4" cy="618.8" r="2.55" fill="#c4c6cf"/><circle cx="1198.1" cy="623.2" r="2.65" fill="#c4c6cf"/><circle cx="1190.9" cy="626.7" r="3.1" fill="#c4c6cf"/><circle cx="1300.7" cy="624.3" r="4.25" fill="#c4c6cf"/><circle cx="1193.6" cy="634.7" r="2.1" fill="#c4c6cf"/><circle cx="1260.5" cy="632.3" r="2.2" fill="#c4c6cf"/><circle cx="1248.8" cy="636.8" r="3.3" fill="#c4c6cf"/><circle cx="1265.8" cy="646.6" r="4.0" fill="#c4c6cf"/><circle cx="1283.4" cy="644.8" r="3.6" fill="#c4c6cf"/><circle cx="1234.8" cy="648.0" r="2.2" fill="#c4c6cf"/><circle cx="1221.0" cy="653.6" r="2.8" fill="#c4c6cf"/><circle cx="1173.2" cy="654.0" r="2.1" fill="#c4c6cf"/><circle cx="1247.4" cy="605.2" r="2.9" fill="#00c08b"/><circle cx="1205.0" cy="634.9" r="3.1" fill="#00c08b"/><circle cx="1221.4" cy="633.9" r="2.65" fill="#00c08b"/><circle cx="1240.6" cy="629.6" r="2.1" fill="#00c08b"/><circle cx="1170.7" cy="645.0" r="2.2" fill="#00c08b"/><circle cx="1224.9" cy="645.9" r="2.0" fill="#00c08b"/><circle cx="1192.3" cy="655.0" r="2.6" fill="#00c08b"/><circle cx="1319.2" cy="620.0" r="2.3" fill="#00c08b"/><circle cx="1166.8" cy="658.4" r="2.6" fill="#00c08b"/><circle cx="1235.2" cy="665.5" r="3.5" fill="#c4c6cf"/><circle cx="1280.5" cy="667.1" r="3.2" fill="#c4c6cf"/><circle cx="1269.0" cy="655.0" r="3.5" fill="#c4c6cf"/><circle cx="1303.8" cy="653.0" r="2.7" fill="#c4c6cf"/><circle cx="1308.0" cy="673.4" r="3.7" fill="#c4c6cf"/><circle cx="1228.1" cy="678.8" r="2.1" fill="#c4c6cf"/><circle cx="1247.6" cy="679.3" r="2.55" fill="#c4c6cf"/><circle cx="1261.0" cy="679.3" r="4.1" fill="#c4c6cf"/><circle cx="1286.9" cy="679.8" r="1.3" fill="#c4c6cf"/><circle cx="1263.5" cy="688.3" r="1.6" fill="#c4c6cf"/><circle cx="1303.0" cy="686.7" r="3.7" fill="#00c08b"/><circle cx="1319.0" cy="690.3" r="3.8" fill="#c4c6cf"/><circle cx="1219.8" cy="696.8" r="3.7" fill="#00c08b"/><circle cx="1245.1" cy="692.9" r="2.9" fill="#00c08b"/><circle cx="1251.5" cy="691.0" r="2.65" fill="#00c08b"/><circle cx="1248.6" cy="700.3" r="1.6" fill="#00c08b"/><circle cx="1277.0" cy="694.9" r="3.2" fill="#c4c6cf"/><circle cx="1291.3" cy="701.1" r="2.2" fill="#00c08b"/><circle cx="1316.9" cy="704.8" r="4.0" fill="#c4c6cf"/><circle cx="1243.0" cy="711.7" r="2.55" fill="#00c08b"/><circle cx="1260.0" cy="712.2" r="4.1" fill="#c4c6cf"/><circle cx="1347.9" cy="622.1" r="2.1" fill="#00c08b"/><circle cx="1360.8" cy="630.4" r="2.1" fill="#00c08b"/><circle cx="1332.6" cy="634.3" r="1.9" fill="#00c08b"/><circle cx="1345.8" cy="634.5" r="2.1" fill="#c4c6cf"/><circle cx="1368.2" cy="638.8" r="2.1" fill="#c4c6cf"/><circle cx="1377.0" cy="642.5" r="2.4" fill="#00c08b"/><circle cx="1393.2" cy="645.5" r="3.7" fill="#c4c6cf"/><circle cx="1409.4" cy="642.3" r="3.7" fill="#00c08b"/><circle cx="1345.1" cy="643.6" r="1.2" fill="#c4c6cf"/><circle cx="1331.6" cy="648.8" r="3.2" fill="#00c08b"/><circle cx="1340.8" cy="652.1" r="1.9" fill="#c4c6cf"/><circle cx="1362.1" cy="653.2" r="2.1" fill="#00c08b"/><circle cx="1384.8" cy="652.2" r="2.1" fill="#c4c6cf"/><circle cx="1428.2" cy="627.6" r="2.0" fill="#c4c6cf"/><circle cx="1456.7" cy="630.6" r="2.55" fill="#c4c6cf"/><circle cx="1467.8" cy="635.6" r="3.5" fill="#c4c6cf"/><circle cx="1444.4" cy="644.1" r="2.55" fill="#c4c6cf"/><circle cx="1428.2" cy="654.7" r="3.2" fill="#c4c6cf"/><circle cx="1418.3" cy="660.6" r="2.55" fill="#c4c6cf"/><circle cx="1434.3" cy="661.1" r="1.9" fill="#c4c6cf"/><circle cx="1471.5" cy="661.4" r="1.9" fill="#c4c6cf"/><circle cx="1427.4" cy="666.1" r="1.9" fill="#c4c6cf"/><circle cx="1364.2" cy="666.4" r="3.2" fill="#c4c6cf"/><circle cx="1325.9" cy="673.1" r="3.2" fill="#2bb3ff"/><circle cx="1349.9" cy="671.7" r="2.0" fill="#00c08b"/><circle cx="1383.5" cy="669.9" r="2.1" fill="#00c08b"/><circle cx="1437.9" cy="681.0" r="2.9" fill="#c4c6cf"/><circle cx="1348.5" cy="693.5" r="2.5" fill="#c4c6cf"/><circle cx="1454.2" cy="692.5" r="1.7" fill="#c4c6cf"/><circle cx="1399.9" cy="698.0" r="4.0" fill="#00c08b"/><circle cx="1337.1" cy="708.3" r="3.1" fill="#00c08b"/><circle cx="1355.0" cy="718.9" r="2.55" fill="#00c08b"/><circle cx="1363.4" cy="723.9" r="2.4" fill="#c4c6cf"/><circle cx="1356.7" cy="729.5" r="3.2" fill="#c4c6cf"/><circle cx="1285.5" cy="726.7" r="4.35" fill="#c4c6cf"/><circle cx="1307.3" cy="729.9" r="4.25" fill="#00c08b"/><circle cx="1323.3" cy="724.5" r="3.3" fill="#c4c6cf"/><circle cx="1320.6" cy="735.9" r="2.4" fill="#c4c6cf"/><circle cx="1308.2" cy="740.2" r="3.2" fill="#c4c6cf"/><circle cx="1222.5" cy="740.2" r="2.0" fill="#c4c6cf"/><circle cx="1237.9" cy="746.5" r="2.1" fill="#00c08b"/><circle cx="1274.9" cy="742.8" r="3.3" fill="#c4c6cf"/><circle cx="1264.1" cy="749.2" r="2.0" fill="#c4c6cf"/><circle cx="1260.6" cy="755.8" r="2.55" fill="#c4c6cf"/><circle cx="1280.2" cy="754.3" r="2.2" fill="#c4c6cf"/><circle cx="1299.9" cy="752.1" r="2.0" fill="#c4c6cf"/><circle cx="1330.8" cy="750.3" r="2.55" fill="#c4c6cf"/><circle cx="1291.6" cy="760.9" r="3.3" fill="#c4c6cf"/><circle cx="1310.3" cy="766.7" r="3.8" fill="#c4c6cf"/><circle cx="1274.4" cy="774.3" r="2.75" fill="#00c08b"/><circle cx="1298.2" cy="776.3" r="3.6" fill="#00c08b"/><circle cx="1332.3" cy="775.0" r="2.75" fill="#00c08b"/><circle cx="1255.6" cy="779.1" r="3.3" fill="#c4c6cf"/><circle cx="1317.5" cy="782.1" r="3.3" fill="#c4c6cf"/><circle cx="1306.2" cy="788.5" r="3.1" fill="#00c08b"/><circle cx="1361.3" cy="782.1" r="2.1" fill="#00c08b"/><circle cx="1292.3" cy="796.3" r="3.3" fill="#c4c6cf"/><circle cx="1412.4" cy="702.3" r="2.1" fill="#c4c6cf"/><circle cx="1375.7" cy="707.8" r="2.2" fill="#c4c6cf"/><circle cx="1385.0" cy="711.3" r="1.6" fill="#c4c6cf"/><circle cx="1416.6" cy="714.2" r="2.4" fill="#c4c6cf"/><circle cx="1437.5" cy="714.2" r="1.9" fill="#c4c6cf"/><circle cx="1424.0" cy="729.4" r="3.2" fill="#c4c6cf"/><circle cx="1441.6" cy="735.8" r="2.4" fill="#c4c6cf"/><circle cx="1375.9" cy="736.9" r="4.25" fill="#c4c6cf"/><circle cx="1397.5" cy="737.4" r="4.0" fill="#c4c6cf"/><circle cx="1409.9" cy="743.8" r="2.1" fill="#c4c6cf"/><circle cx="1446.6" cy="746.7" r="2.1" fill="#00c08b"/><circle cx="1424.0" cy="750.4" r="3.5" fill="#c4c6cf"/><circle cx="1438.9" cy="750.7" r="2.55" fill="#c4c6cf"/><circle cx="1374.4" cy="756.0" r="2.9" fill="#c4c6cf"/><circle cx="1376.0" cy="778.2" r="3.0" fill="#c4c6cf"/><circle cx="1265.4" cy="797.9" r="2.6" fill="#c4c6cf"/><circle cx="1330.9" cy="808.8" r="2.2" fill="#c4c6cf"/><circle cx="1392.3" cy="790.0" r="1.9" fill="#c4c6cf"/><circle cx="1412.9" cy="791.9" r="4.0" fill="#c4c6cf"/><circle cx="1358.8" cy="798.8" r="3.4" fill="#00c08b"/><circle cx="1378.1" cy="797.8" r="2.5" fill="#00c08b"/><circle cx="1386.3" cy="803.5" r="3.75" fill="#00c08b"/><circle cx="1374.1" cy="805.9" r="2.6" fill="#00c08b"/><circle cx="1409.6" cy="806.3" r="2.6" fill="#c4c6cf"/><circle cx="1426.3" cy="814.0" r="3.0" fill="#00c08b"/><circle cx="1409.6" cy="822.5" r="3.4" fill="#00c08b"/><circle cx="1370.0" cy="821.0" r="2.2" fill="#c4c6cf"/><circle cx="1366.9" cy="830.6" r="2.8" fill="#00c08b"/><circle cx="1376.6" cy="830.6" r="1.75" fill="#c4c6cf"/><circle cx="1356.3" cy="846.3" r="2.2" fill="#00c08b"/><circle cx="1377.5" cy="848.8" r="2.2" fill="#c4c6cf"/><circle cx="1364.0" cy="859.0" r="3.9" fill="#c4c6cf"/><circle cx="1351.9" cy="865.9" r="3.4" fill="#c4c6cf"/><circle cx="1374.4" cy="868.1" r="3.0" fill="#00c08b"/></svg>
<div class="t" style="left:13.50px;top:11.81px;font-size:24.8px;font-weight:400;color:#191b23;letter-spacing:0.857px;">Overview</div>
<div class="t" style="left:149.20px;top:11.81px;font-size:24.8px;font-weight:400;color:#191b23;letter-spacing:0.900px;">Network Graph</div>
<div class="t" style="left:352.10px;top:11.81px;font-size:24.8px;font-weight:400;color:#191b23;letter-spacing:0.812px;">Backlinks</div>
<div class="t" style="left:488.60px;top:11.81px;font-size:24.8px;font-weight:400;color:#191b23;letter-spacing:0.900px;">Anchors</div>
<div class="t" style="left:610.60px;top:11.81px;font-size:24.8px;font-weight:400;color:#191b23;letter-spacing:0.587px;">Referring Domains</div>
<div class="t" style="left:851.30px;top:11.81px;font-size:24.8px;font-weight:400;color:#191b23;letter-spacing:0.608px;">Indexed Pages</div>
<div class="t" style="left:1048.60px;top:11.81px;font-size:24.8px;font-weight:400;color:#191b23;letter-spacing:0.860px;">Outbound Domains</div>
<div class="t" style="left:13.00px;top:85.14px;font-size:22.4px;font-weight:400;color:#191b23;letter-spacing:-0.040px;">Root Domain</div>
<div class="t" style="left:281.60px;top:85.14px;font-size:22.4px;font-weight:400;color:#191b23;letter-spacing:-0.060px;">Root Domain</div>
<div class="t" style="left:40.00px;top:135.59px;font-size:17.5px;font-weight:400;color:#006dca;letter-spacing:1.350px;">You</div>
<div class="t" style="left:98.00px;top:133.97px;font-size:22.6px;font-weight:400;color:#191b23;letter-spacing:0.882px;">yourdomai...</div>
<div class="t" style="left:333.00px;top:133.57px;font-size:22.6px;font-weight:400;color:#8b8e97;letter-spacing:0.385px;">Add competitor</div>
<div class="t" style="left:564.00px;top:134.25px;font-size:21.8px;font-weight:700;color:#ffffff;letter-spacing:-0.167px;">Compare</div>
<div class="t" style="left:732.40px;top:133.27px;font-size:22.6px;font-weight:400;color:#006dca;letter-spacing:0.455px;">Add up to 3 competitors</div>
<div class="t" style="left:44.20px;top:227.19px;font-size:20.8px;font-weight:400;color:#191b23;letter-spacing:0.800px;">Referring Domains</div>
<div class="t" style="left:310.50px;top:227.19px;font-size:20.8px;font-weight:400;color:#191b23;letter-spacing:0.888px;">Backlinks</div>
<div class="t" style="left:511.50px;top:227.19px;font-size:20.8px;font-weight:400;color:#191b23;letter-spacing:1.115px;">Monthly Visits</div>
<div class="t" style="left:735.50px;top:227.19px;font-size:20.8px;font-weight:400;color:#191b23;letter-spacing:1.029px;">Organic Traffic</div>
<div class="t" style="left:965.60px;top:227.19px;font-size:20.8px;font-weight:400;color:#191b23;letter-spacing:0.960px;">Outbound Doma...</div>
<div class="t" style="left:1232.30px;top:227.19px;font-size:20.8px;font-weight:400;color:#191b23;letter-spacing:0.938px;">Overall Toxicity Score</div>
<div class="t" style="left:45.15px;top:260.51px;font-size:38.5px;font-weight:700;color:#008ff8;transform:scaleX(1.000);transform-origin:0 0">9</div>
<div class="t" style="left:69.05px;top:260.51px;font-size:38.5px;font-weight:700;color:#008ff8;transform:scaleX(1.000);transform-origin:0 0">2</div>
<div class="t" style="left:91.70px;top:260.51px;font-size:38.5px;font-weight:700;color:#008ff8;transform:scaleX(1.000);transform-origin:0 0">.</div>
<svg class="ic" style="left:0;top:0" width="1" height="1"><polygon fill="#008ff8" points="107.00,265.00 113.00,265.00 113.00,292.20 107.00,292.20 107.00,270.17 100.80,274.11 100.80,268.94"/></svg>
<div class="t" style="left:116.25px;top:260.51px;font-size:38.5px;font-weight:700;color:#008ff8;transform:scaleX(1.000);transform-origin:0 0">K</div>
<svg class="ic" style="left:0;top:0" width="1" height="1"><polygon fill="#008ff8" points="318.90,265.00 324.90,265.00 324.90,292.20 318.90,292.20 318.90,270.17 312.50,274.11 312.50,268.94"/></svg>
<div class="t" style="left:329.85px;top:260.51px;font-size:38.5px;font-weight:700;color:#008ff8;transform:scaleX(1.000);transform-origin:0 0">3</div>
<div class="t" style="left:352.60px;top:260.51px;font-size:38.5px;font-weight:700;color:#008ff8;transform:scaleX(1.000);transform-origin:0 0">.</div>
<div class="t" style="left:364.35px;top:260.51px;font-size:38.5px;font-weight:700;color:#008ff8;transform:scaleX(1.000);transform-origin:0 0">5</div>
<div class="t" style="left:387.80px;top:260.51px;font-size:38.5px;font-weight:700;color:#008ff8;transform:scaleX(1.000);transform-origin:0 0">M</div>
<div class="t" style="left:513.10px;top:260.51px;font-size:38.5px;font-weight:700;color:#008ff8;transform:scaleX(1.000);transform-origin:0 0">4</div>
<div class="t" style="left:536.00px;top:260.51px;font-size:38.5px;font-weight:700;color:#008ff8;transform:scaleX(1.000);transform-origin:0 0">.</div>
<div class="t" style="left:547.45px;top:260.51px;font-size:38.5px;font-weight:700;color:#008ff8;transform:scaleX(1.000);transform-origin:0 0">3</div>
<div class="t" style="left:571.50px;top:260.51px;font-size:38.5px;font-weight:700;color:#008ff8;transform:scaleX(1.000);transform-origin:0 0">M</div>
<div class="t" style="left:735.85px;top:260.51px;font-size:38.5px;font-weight:700;color:#008ff8;transform:scaleX(1.000);transform-origin:0 0">5</div>
<div class="t" style="left:757.80px;top:260.51px;font-size:38.5px;font-weight:700;color:#008ff8;transform:scaleX(1.000);transform-origin:0 0">.</div>
<div class="t" style="left:768.85px;top:260.51px;font-size:38.5px;font-weight:700;color:#008ff8;transform:scaleX(1.000);transform-origin:0 0">8</div>
<div class="t" style="left:793.05px;top:260.51px;font-size:38.5px;font-weight:700;color:#008ff8;transform:scaleX(1.000);transform-origin:0 0">M</div>
<div class="t" style="left:965.60px;top:260.51px;font-size:38.5px;font-weight:700;color:#008ff8;transform:scaleX(1.000);transform-origin:0 0">2</div>
<div class="t" style="left:988.30px;top:260.51px;font-size:38.5px;font-weight:700;color:#008ff8;transform:scaleX(1.000);transform-origin:0 0">.</div>
<div class="t" style="left:997.95px;top:260.51px;font-size:38.5px;font-weight:700;color:#008ff8;transform:scaleX(1.000);transform-origin:0 0">7</div>
<div class="t" style="left:1019.00px;top:260.51px;font-size:38.5px;font-weight:700;color:#008ff8;transform:scaleX(1.000);transform-origin:0 0">K</div>
<div class="t" style="left:1231.30px;top:260.81px;font-size:38.5px;font-weight:700;color:#a8abb3;letter-spacing:0.500px;">n/a</div>
<div class="t" style="left:150.70px;top:278.59px;font-size:17.5px;font-weight:400;color:#0b7a68;transform:scaleX(0.8400);transform-origin:0 0">&lt;</div>
<svg class="ic" style="left:0;top:0" width="1" height="1"><path d="M162.20 282.60 L166.32 279.60 L166.32 292.00" fill="none" stroke="#0b7a68" stroke-width="1.75" stroke-linejoin="round"/></svg>
<div class="t" style="left:170.70px;top:278.59px;font-size:17.5px;font-weight:400;color:#0b7a68;transform:scaleX(0.7750);transform-origin:0 0">%</div>
<div class="t" style="left:426.00px;top:278.59px;font-size:17.5px;font-weight:400;color:#ff4953;transform:scaleX(1.0000);transform-origin:0 0">−</div>
<div class="t" style="left:438.50px;top:277.99px;font-size:18.2px;font-weight:400;color:#ff4953;transform:scaleX(0.8000);transform-origin:0 0">5</div>
<div class="t" style="left:448.50px;top:278.59px;font-size:17.5px;font-weight:400;color:#ff4953;transform:scaleX(0.7625);transform-origin:0 0">%</div>
<div class="t" style="left:44.80px;top:375.64px;font-size:25px;font-weight:700;color:#191b23;letter-spacing:0.093px;">Authority Score</div>
<div class="t" style="left:577.50px;top:375.64px;font-size:25px;font-weight:700;color:#191b23;letter-spacing:0.085px;">Authority Score Trend</div>
<div class="t" style="left:1109.20px;top:375.64px;font-size:25px;font-weight:700;color:#191b23;letter-spacing:0.092px;">Network Graph</div>
<div class="t" style="left:43.90px;top:448.94px;font-size:31.5px;font-weight:700;color:#191b23;letter-spacing:1.400px;">75</div>
<div class="t" style="left:106.70px;top:453.32px;font-size:19px;font-weight:400;color:#007c65;letter-spacing:0.319px;">Excellent and niche relevant</div>
<div class="t" style="left:79.80px;top:568.12px;font-size:19px;font-weight:400;color:#6c6e79;letter-spacing:-0.100px;">Link</div>
<div class="t" style="left:70.40px;top:591.72px;font-size:19px;font-weight:400;color:#6c6e79;letter-spacing:-0.025px;">Power</div>
<div class="t" style="left:404.30px;top:568.22px;font-size:19px;font-weight:400;color:#6c6e79;letter-spacing:0.033px;">Organic</div>
<div class="t" style="left:410.40px;top:591.52px;font-size:19px;font-weight:400;color:#6c6e79;letter-spacing:0.367px;">Traffic</div>
<div class="t" style="left:205.50px;top:832.52px;font-size:19px;font-weight:400;color:#6c6e79;letter-spacing:0.214px;">Natural Profile</div>
<div class="t" style="left:868.30px;top:453.77px;font-size:21.3px;font-weight:400;color:#6c6e79;letter-spacing:0.662px;">Last 12 months</div>
<div class="t" style="left:580.50px;top:514.21px;font-size:18.3px;font-weight:400;color:#6c6e79;letter-spacing:0.900px;">100</div>
<div class="t" style="left:591.00px;top:595.41px;font-size:18.3px;font-weight:400;color:#6c6e79;letter-spacing:1.300px;">75</div>
<div class="t" style="left:591.00px;top:675.71px;font-size:18.3px;font-weight:400;color:#6c6e79;letter-spacing:1.300px;">50</div>
<div class="t" style="left:591.00px;top:756.61px;font-size:18.3px;font-weight:400;color:#6c6e79;letter-spacing:1.300px;">25</div>
<div class="t" style="left:602.00px;top:837.01px;font-size:18.3px;font-weight:400;color:#6c6e79;letter-spacing:0.000px;">0</div>
<div class="t" style="left:686.40px;top:864.17px;font-size:18.7px;font-weight:400;color:#6c6e79;letter-spacing:0.657px;">Jul 2023</div>
<div class="t" style="left:802.30px;top:864.17px;font-size:18.7px;font-weight:400;color:#6c6e79;letter-spacing:0.786px;">Nov 2023</div>
<div class="t" style="left:924.20px;top:864.17px;font-size:18.7px;font-weight:400;color:#6c6e79;letter-spacing:0.786px;">Mar 2024</div>
<div class="t" style="left:1250.00px;top:452.95px;font-size:21.2px;font-weight:700;color:#191b23;letter-spacing:0.562px;">Reputable</div>
<div class="t" style="left:1242.50px;top:648.54px;font-size:19.8px;font-weight:700;color:#008ff8;letter-spacing:0.608px;">yourdomain.com</div>
<div class="t" style="left:1123.00px;top:861.07px;font-size:22.6px;font-weight:700;color:#ffffff;letter-spacing:-0.453px;">View full report</div>
</body></html>
